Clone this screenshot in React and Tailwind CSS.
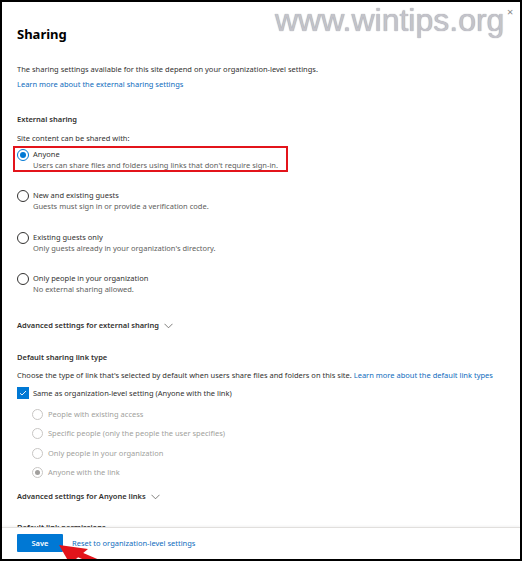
import React from 'react';

const font = { fontFamily: '"Segoe UI", "Noto Sans", "Open Sans", sans-serif' };

const externalOptions = [
  { label: 'Anyone', sub: "Users can share files and folders using links that don't require sign-in.", checked: true, h: 'h-[41px]' },
  { label: 'New and existing guests', sub: 'Guests must sign in or provide a verification code.', h: 'h-[42px]' },
  { label: 'Existing guests only', sub: "Only guests already in your organization's directory.", h: 'h-[41px]' },
  { label: 'Only people in your organization', sub: 'No external sharing allowed.', h: 'h-[22px]' },
];

const linkTypes = [
  { label: 'People with existing access' },
  { label: 'Specific people (only the people the user specifies)' },
  { label: 'Only people in your organization' },
  { label: 'Anyone with the link', checked: true },
];

const Chevron = () => (
  <svg width="9" height="6" viewBox="0 0 9 6" className="ml-[5px]">
    <path d="M0.5 0.8 L4.5 4.8 L8.5 0.8" fill="none" stroke="#605e5c" strokeWidth="0.8" />
  </svg>
);

const Radio = ({ checked }) => (
  <span
    className={`w-[12px] h-[12px] rounded-full border flex items-center justify-center shrink-0 ${checked ? 'border-[#0078d4]' : 'border-[#323130]'}`}
  >
    {checked && <span className="w-[6px] h-[6px] rounded-full bg-[#0078d4]" />}
  </span>
);

const DisabledRadio = ({ checked }) => (
  <span className="w-[11px] h-[11px] rounded-full border border-[#c8c6c4] flex items-center justify-center shrink-0">
    {checked && <span className="w-[5px] h-[5px] rounded-full bg-[#a19f9d]" />}
  </span>
);

const Option = ({ option }) => (
  <div className={option.h}>
    <div className="flex items-center h-[11px]">
      <Radio checked={option.checked} />
      <span className="ml-[4px] text-[#323130]">{option.label}</span>
    </div>
    <div className="pl-[16px] leading-[11px] text-[#605e5c]">{option.sub}</div>
  </div>
);

export default function App() {
  return (
    <div
      className="w-[522px] h-[561px] border-2 border-black bg-white relative overflow-hidden flex flex-col text-[7.5px] leading-[11px]"
      style={font}
    >
      {/* watermark + close */}
      <div
        className="absolute left-[273px] top-[-2px] text-[32px] leading-[40px] text-[#c3c3ca]"
        style={{ fontFamily: '"Liberation Sans", Arial, sans-serif', textShadow: '0 0 1px #8d8d96' }}
      >
        www.wintips.org
      </div>
      <div className="absolute left-[505px] top-[4px] text-[11px] leading-[12px] text-[#8a8886]">×</div>

      <div className="flex-1 overflow-hidden px-[15px]">
        <div className="mt-[24px] text-[13px] leading-[16px] font-bold text-black">Sharing</div>
        <div className="mt-[22px] text-[#323130]">
          The sharing settings available for this site depend on your organization-level settings.
        </div>
        <div className="mt-[4px] text-[#0f6cbd]">Learn more about the external sharing settings</div>

        <div className="mt-[24px] font-semibold text-[#323130]">External sharing</div>
        <div className="mt-[8px] text-[#323130]">Site content can be shared with:</div>

        <div className="mt-[5px] relative">
          <div className="absolute left-[-4px] top-[-3px] w-[275px] h-[26px] border-2 border-[#e3141b]" />
          {externalOptions.map((o) => (
            <Option key={o.label} option={o} />
          ))}
        </div>

        <div className="mt-[25px] flex items-center text-[#323130] font-semibold">
          Advanced settings for external sharing
          <Chevron />
        </div>

        <div className="mt-[21px] font-semibold text-[#323130]">Default sharing link type</div>
        <div className="mt-[7px] text-[#323130]">
          Choose the type of link that's selected by default when users share files and folders on this site.{' '}
          <span className="text-[#0f6cbd]">Learn more about the default link types</span>
        </div>

        <div className="mt-[6px] flex items-center h-[12px]">
          <span className="w-[12px] h-[12px] bg-[#0078d4] flex items-center justify-center shrink-0">
            <svg width="8" height="6" viewBox="0 0 8 6">
              <path d="M1 3.2 L3 5 L7 1" fill="none" stroke="white" strokeWidth="0.9" />
            </svg>
          </span>
          <span className="ml-[4px] text-[#323130]">Same as organization-level setting (Anyone with the link)</span>
        </div>

        <div className="mt-[6px] pl-[15px]">
          {linkTypes.map((t, i) => (
            <div key={t.label} className={`flex items-center ${i === 2 ? 'h-[20px]' : 'h-[19px]'}`}>
              <DisabledRadio checked={t.checked} />
              <span className="ml-[5px] text-[#a19f9d]">{t.label}</span>
            </div>
          ))}
        </div>

        <div className="mt-[9px] flex items-center font-semibold text-[#323130]">
          Advanced settings for Anyone links
          <Chevron />
        </div>
        <div className="mt-[20px] font-semibold text-[#323130]">Default link permissions</div>
      </div>

      <div className="h-[32px] shrink-0 border-t border-[#e1dfdd] shadow-[0_-1px_2px_rgba(0,0,0,0.05)] px-[15px] flex items-start pt-[6px]">
        <button className="w-[46px] h-[18px] bg-[#0078d4] text-white font-semibold flex items-center justify-center rounded-[1px]">
          Save
        </button>
        <span className="ml-[9px] mt-[4px] text-[#0f6cbd]">Reset to organization-level settings</span>
      </div>

      {/* red annotation arrow */}
      <svg className="absolute left-[40px] top-[530px]" width="80" height="31" viewBox="40 530 80 31">
        <path d="M76 552 L104 564" stroke="#e3141b" strokeWidth="6" fill="none" />
        <polygon points="57,543 86,547 68,562" fill="#e3141b" />
      </svg>
    </div>
  );
}
